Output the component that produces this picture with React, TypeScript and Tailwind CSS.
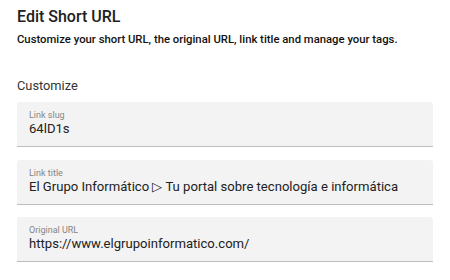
import React from "react";

const fields = [
    { label: "Link slug", value: "64lD1s" },
    { label: "Link title", value: "El Grupo Informático ▷ Tu portal sobre tecnología e informática" },
    { label: "Original URL", value: "https://www.elgrupoinformatico.com/" },
];

const Field: React.FC<{ label: string; value: string }> = ({ label, value }) => (
    <div className="h-[45px] bg-[#f3f3f3] rounded-t-[3px] border-b-[1.5px] border-[#bdbdbd] px-3 pt-[7px]">
        <div className="text-[9px] leading-[12px] text-[#858585]">{label}</div>
        <div className="text-[13.1px] leading-[16px] text-[#212121] whitespace-nowrap">{value}</div>
    </div>
);

export default function App() {
    return (
        <div className="w-[450px] h-[280px] bg-white px-[17px] pt-[7px] font-['Roboto',sans-serif]">
            <h1 className="text-[16px] leading-[20px] font-medium text-[#212121]">Edit Short URL</h1>
            <p className="text-[11.3px] leading-[14px] font-medium text-[#111] mt-[6px]">
                Customize your short URL, the original URL, link title and manage your tags.
            </p>
            <h2 className="text-[12.8px] leading-[16px] text-[#333] mt-[31px]">Customize</h2>
            <div className="flex flex-col gap-[12.5px] mt-[8px]">
                {fields.map((f) => (
                    <Field key={f.label} label={f.label} value={f.value} />
                ))}
            </div>
        </div>
    );
}
